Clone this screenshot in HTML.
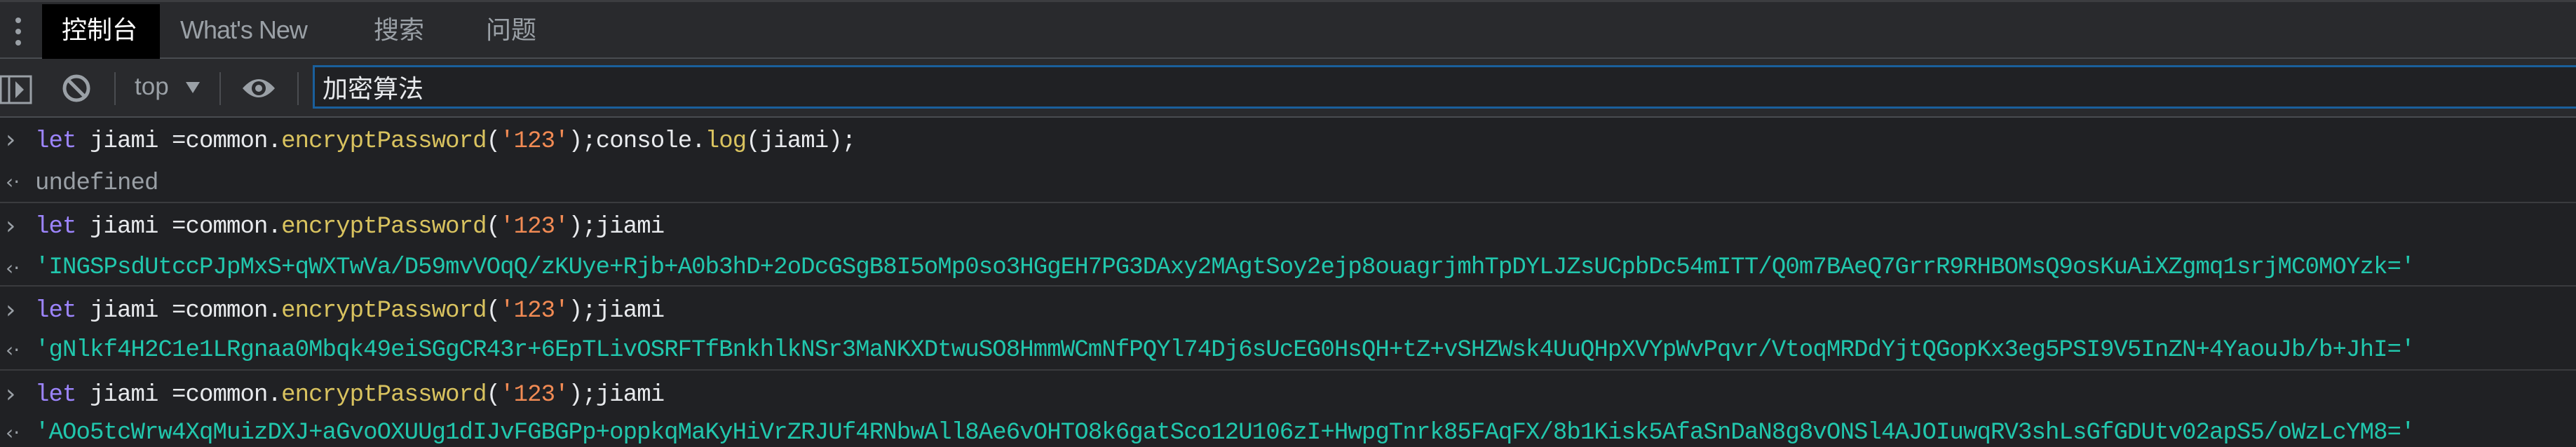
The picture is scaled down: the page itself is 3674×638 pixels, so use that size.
<!DOCTYPE html>
<html><head><meta charset="utf-8"><style>
*{margin:0;padding:0;box-sizing:border-box}
body{width:3674px;height:632px;background:#202124;overflow:hidden;position:relative;font-family:"Liberation Sans","Noto Sans CJK SC",sans-serif}
.abs{position:absolute}
#tabs{left:0;top:0;width:3674px;height:84px;background:#292a2d;border-top:3px solid #3c3d40;border-bottom:2px solid #494c50}
.tab{position:absolute;top:10px;font-size:36px;color:#9aa0a6;line-height:60px}
#tb{left:0;top:84px;width:3674px;height:84px;background:#292a2d;border-bottom:2px solid #494c50}
.code{position:absolute;left:50px;font-family:"Liberation Mono",monospace;font-size:34px;letter-spacing:-0.9px;line-height:40px;white-space:pre;color:#e8eaed}
.kw{color:#9d85ff}.fn{color:#d9c35f}.st{color:#f28b54}.res{color:#21c7ad}
.sep{position:absolute;left:0;width:3674px;height:2px;background:#3a3b3e}
.pr{position:absolute;left:8px;color:#9aa0a6;font-family:"DejaVu Sans",sans-serif;font-size:36px;line-height:40px}
</style></head><body>
<div id="tabs" class="abs">
  <div class="abs" style="left:22px;top:22px;width:8px;height:8px;border-radius:4px;background:#9aa0a6"></div>
  <div class="abs" style="left:22px;top:38px;width:8px;height:8px;border-radius:4px;background:#9aa0a6"></div>
  <div class="abs" style="left:22px;top:54px;width:8px;height:8px;border-radius:4px;background:#9aa0a6"></div>
  <div class="abs" style="left:60px;top:3px;width:168px;height:78px;background:#000"></div>
  <div class="tab" style="left:88px;color:#fff">控制台</div>
  <div class="tab" style="left:257px;letter-spacing:-1px">What's New</div>
  <div class="tab" style="left:533px">搜索</div>
  <div class="tab" style="left:693px">问题</div>
</div>
<div id="tb" class="abs">
  <svg class="abs" style="left:0;top:0" width="450" height="84" viewBox="0 84 450 84">
    <rect x="1" y="109" width="43" height="38" fill="none" stroke="#9aa0a6" stroke-width="3"/>
    <line x1="13" y1="109" x2="13" y2="147" stroke="#9aa0a6" stroke-width="3"/>
    <path d="M22 116 L34 128 L22 140Z" fill="#9aa0a6"/>
    <circle cx="109" cy="126" r="17" fill="none" stroke="#9aa0a6" stroke-width="5"/>
    <line x1="97" y1="114" x2="121" y2="138" stroke="#9aa0a6" stroke-width="5"/>
    <line x1="164" y1="103" x2="164" y2="150" stroke="#4a4c50" stroke-width="2"/>
    <path d="M265 117 L285 117 L275 133Z" fill="#9aa0a6"/>
    <line x1="314" y1="103" x2="314" y2="150" stroke="#4a4c50" stroke-width="2"/>
    <path d="M346 126 Q369 100 392 126 Q369 152 346 126Z" fill="#9aa0a6"/>
    <circle cx="369" cy="126" r="10" fill="#292a2d"/>
    <circle cx="369" cy="126" r="5" fill="#9aa0a6"/>
    <line x1="425" y1="103" x2="425" y2="150" stroke="#4a4c50" stroke-width="2"/>
  </svg>
  <div class="abs" style="left:192px;top:20px;font-size:35px;color:#9aa0a6">top</div>
  <div class="abs" style="left:446px;top:9px;width:3240px;height:62px;border:3px solid #1a5f9c;background:#202124"></div>
  <div class="abs" style="left:460px;top:19px;font-size:36px;color:#e8eaed;font-family:'Noto Sans CJK SC',sans-serif;line-height:42px">加密算法</div>
</div>

<div class="pr" style="top:180px">›</div>
<div class="code" style="top:182px"><span class="kw">let</span> jiami =common.<span class="fn">encryptPassword</span>(<span class="st">'123'</span>);console.<span class="fn">log</span>(jiami);</div>
<div class="pr" style="top:240px;font-size:28px">‹·</div>
<div class="code" style="top:242px;color:#9aa0a6">undefined</div>
<div class="sep" style="top:288px"></div>

<div class="pr" style="top:303px">›</div>
<div class="code" style="top:304px"><span class="kw">let</span> jiami =common.<span class="fn">encryptPassword</span>(<span class="st">'123'</span>);jiami</div>
<div class="pr" style="top:363px;font-size:28px">‹·</div>
<div class="code res" style="top:362px">'INGSPsdUtccPJpMxS+qWXTwVa/D59mvVOqQ/zKUye+Rjb+A0b3hD+2oDcGSgB8I5oMp0so3HGgEH7PG3DAxy2MAgtSoy2ejp8ouagrjmhTpDYLJZsUCpbDc54mITT/Q0m7BAeQ7GrrR9RHBOMsQ9osKuAiXZgmq1srjMC0MOYzk='</div>
<div class="sep" style="top:407px"></div>

<div class="pr" style="top:423px">›</div>
<div class="code" style="top:424px"><span class="kw">let</span> jiami =common.<span class="fn">encryptPassword</span>(<span class="st">'123'</span>);jiami</div>
<div class="pr" style="top:480px;font-size:28px">‹·</div>
<div class="code res" style="top:480px">'gNlkf4H2C1e1LRgnaa0Mbqk49eiSGgCR43r+6EpTLivOSRFTfBnkhlkNSr3MaNKXDtwuSO8HmmWCmNfPQYl74Dj6sUcEG0HsQH+tZ+vSHZWsk4UuQHpXVYpWvPqvr/VtoqMRDdYjtQGopKx3eg5PSI9V5InZN+4YaouJb/b+JhI='</div>
<div class="sep" style="top:527px"></div>

<div class="pr" style="top:543px">›</div>
<div class="code" style="top:544px"><span class="kw">let</span> jiami =common.<span class="fn">encryptPassword</span>(<span class="st">'123'</span>);jiami</div>
<div class="pr" style="top:598px;font-size:28px">‹·</div>
<div class="code res" style="top:598px">'AOo5tcWrw4XqMuizDXJ+aGvoOXUUg1dIJvFGBGPp+oppkqMaKyHiVrZRJUf4RNbwAll8Ae6vOHTO8k6gatSco12U106zI+HwpgTnrk85FAqFX/8b1Kisk5AfaSnDaN8g8vONSl4AJOIuwqRV3shLsGfGDUtv02apS5/oWzLcYM8='</div>
</body></html>
